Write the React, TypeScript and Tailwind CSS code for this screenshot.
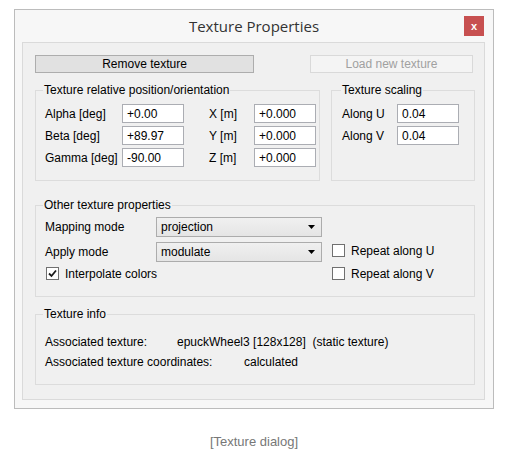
import React from "react";

// Small dialog widgets, Windows-classic look
function TextBox({ value, width = "w-[62px]" }: { value: string; width?: string }) {
    return (
        <div className={`${width} h-[19px] bg-white border border-[#abadb3] pl-[4px] flex items-center leading-none`}>
            {value}
        </div>
    );
}

function Combo({ value }: { value: string }) {
    return (
        <div className="w-[166px] h-[20px] border border-[#acacac] bg-gradient-to-b from-[#f0f0f0] to-[#e5e5e5] flex items-center justify-between pl-[4px] pr-[6px] leading-none">
            <span>{value}</span>
            <svg width="7" height="4" viewBox="0 0 7 4">
                <path d="M0 0 L7 0 L3.5 4 Z" fill="#000" />
            </svg>
        </div>
    );
}

function CheckBox({ label, checked }: { label: string; checked?: boolean }) {
    return (
        <div className="flex items-center gap-[6px] h-[13px] leading-none">
            <div className="w-[13px] h-[13px] bg-white border border-[#707070] flex items-center justify-center">
                {checked && (
                    <svg width="9" height="9" viewBox="0 0 9 9">
                        <path d="M1 4.5 L3.5 7 L8 1.5" stroke="#1a1a1a" strokeWidth="1.8" fill="none" />
                    </svg>
                )}
            </div>
            <span>{label}</span>
        </div>
    );
}

// fieldset keeps no horizontal padding so the legend sits at its own margin
function Group({ title, className, legendOffset = "ml-[7px]", children }: {
    title: string;
    className?: string;
    legendOffset?: string;
    children: React.ReactNode;
}) {
    return (
        <fieldset className={`border border-[#dcdcdc] ${className ?? ""}`}>
            <legend className={`${legendOffset} px-[1px] leading-[14px]`}>{title}</legend>
            {children}
        </fieldset>
    );
}

const angleRows = [
    { label: "Alpha [deg]", value: "+0.00", axis: "X [m]", pos: "+0.000" },
    { label: "Beta [deg]", value: "+89.97", axis: "Y [m]", pos: "+0.000" },
    { label: "Gamma [deg]", value: "-90.00", axis: "Z [m]", pos: "+0.000" },
];

export default function App() {
    return (
        <div className="w-[523px] h-[457px] bg-white pt-[9px] pl-[14px] text-[12px] text-black" style={{ fontFamily: '"Liberation Sans", Arial, sans-serif' }}>
            {/* Window frame */}
            <div className="w-[480px] h-[400px] border border-[#bcbcbc] bg-[#f7f7f7] flex flex-col">
                {/* Title bar */}
                <div className="h-[32px] relative flex items-center justify-center">
                    <span className="text-[15px] text-[#333]" style={{ fontFamily: '"Open Sans", sans-serif' }}>
                        Texture Properties
                    </span>
                    <div className="absolute right-[9px] top-[6px] w-[20px] h-[20px] bg-[#c75050] flex items-center justify-center text-white text-[11px] font-bold leading-none">
                        x
                    </div>
                </div>

                {/* Client area */}
                <div className="ml-[7px] w-[463px] h-[358px] border border-[#dadada] bg-[#f0f0f0] pt-[12px] pl-[12px]">
                    <div className="flex">
                        <div className="w-[219px] h-[18px] border border-[#adadad] bg-[#e1e1e1] flex items-center justify-center leading-none">
                            Remove texture
                        </div>
                        <div className="ml-[56px] w-[163px] h-[18px] border border-[#d9d9d9] bg-[#f4f4f4] flex items-center justify-center leading-none text-[#a0a0a0]">
                            Load new texture
                        </div>
                    </div>

                    <div className="flex mt-[10px]">
                        <Group title="Texture relative position/orientation" className="w-[285px] pt-[7px] pb-[13px]">
                            <div className="flex flex-col gap-[3px] pl-[9px]">
                                {angleRows.map((row) => (
                                    <div key={row.label} className="flex items-center">
                                        <span className="w-[77px]">{row.label}</span>
                                        <TextBox value={row.value} />
                                        <span className="ml-[25px] w-[45px]">{row.axis}</span>
                                        <TextBox value={row.pos} />
                                    </div>
                                ))}
                            </div>
                        </Group>
                        <Group title="Texture scaling" legendOffset="ml-[9px]" className="ml-[11px] w-[144px] pt-[7px]">
                            <div className="flex flex-col gap-[3px] pl-[10px]">
                                <div className="flex items-center">
                                    <span className="w-[55px]">Along U</span>
                                    <TextBox value="0.04" />
                                </div>
                                <div className="flex items-center">
                                    <span className="w-[55px]">Along V</span>
                                    <TextBox value="0.04" />
                                </div>
                            </div>
                        </Group>
                    </div>

                    <Group title="Other texture properties" className="mt-[17px] w-[440px] pt-[5px] pb-[16px]">
                        <div className="grid grid-cols-[111px_166px_auto] gap-y-[5px] items-center pl-[9px]">
                            <span>Mapping mode</span>
                            <Combo value="projection" />
                            <span />
                            <span>Apply mode</span>
                            <Combo value="modulate" />
                            <div className="ml-[10px] self-start mt-[2px]">
                                <CheckBox label="Repeat along U" />
                            </div>
                            <div className="col-span-2 ml-[1px]">
                                <CheckBox label="Interpolate colors" checked />
                            </div>
                            <div className="ml-[10px]">
                                <CheckBox label="Repeat along V" />
                            </div>
                        </div>
                    </Group>

                    <Group title="Texture info" className="mt-[10px] w-[440px] pt-[11px] pb-[12px]">
                        <div className="flex flex-col pl-[9px]">
                            <div className="flex h-[20px] items-center">
                                <span className="w-[132px]">Associated texture:</span>
                                <span className="whitespace-pre">epuckWheel3 [128x128]  (static texture)</span>
                            </div>
                            <div className="flex h-[20px] items-center">
                                <span className="w-[199px]">Associated texture coordinates:</span>
                                <span>calculated</span>
                            </div>
                        </div>
                    </Group>
                </div>
            </div>

            {/* Caption */}
            <div className="w-[480px] mt-[23px] text-center text-[13px] text-[#777]" style={{ fontFamily: '"Liberation Sans", Arial, sans-serif' }}>
                [Texture dialog]
            </div>
        </div>
    );
}
